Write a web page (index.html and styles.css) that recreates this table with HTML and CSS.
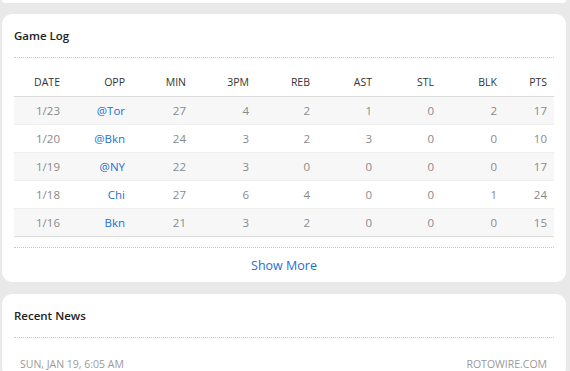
FILE: index.html
```html
<!DOCTYPE html>
<html>
<head>
<meta charset="utf-8">
<link rel="stylesheet" href="styles.css">
</head>
<body>
<div class="page">
  <div class="card card-stub"></div>

  <section class="card">
    <h2 class="card-title">Game Log</h2>
    <div class="log">
      <div class="row head">
        <span>DATE</span><span>OPP</span><span>MIN</span><span>3PM</span><span>REB</span><span>AST</span><span>STL</span><span>BLK</span><span>PTS</span>
      </div>
      <div class="row alt">
        <span>1/23</span><span class="team">@Tor</span><span>27</span><span>4</span><span>2</span><span>1</span><span>0</span><span>2</span><span>17</span>
      </div>
      <div class="row">
        <span>1/20</span><span class="team">@Bkn</span><span>24</span><span>3</span><span>2</span><span>3</span><span>0</span><span>0</span><span>10</span>
      </div>
      <div class="row alt">
        <span>1/19</span><span class="team">@NY</span><span>22</span><span>3</span><span>0</span><span>0</span><span>0</span><span>0</span><span>17</span>
      </div>
      <div class="row">
        <span>1/18</span><span class="team">Chi</span><span>27</span><span>6</span><span>4</span><span>0</span><span>0</span><span>1</span><span>24</span>
      </div>
      <div class="row alt last">
        <span>1/16</span><span class="team">Bkn</span><span>21</span><span>3</span><span>2</span><span>0</span><span>0</span><span>0</span><span>15</span>
      </div>
    </div>
    <div class="more"><a href="#">Show More</a></div>
  </section>

  <section class="card">
    <h2 class="card-title">Recent News</h2>
    <div class="news-meta">
      <span>SUN, JAN 19, 6:05 AM</span>
      <span>ROTOWIRE.COM</span>
    </div>
  </section>
</div>
</body>
</html>
```

FILE: styles.css
```css
* { box-sizing: border-box; }

html, body {
  margin: 0;
  padding: 0;
  background: #e9e9e9;
  font-family: "Open Sans", "Noto Sans", sans-serif;
  overflow: hidden;
}

.page {
  padding: 0 4px 0 2px;
  display: flex;
  flex-direction: column;
  gap: 11px;
}

.card {
  background: #fff;
  border-radius: 10px;
  padding: 0 12px;
}

.card-stub {
  height: 3px;
  border-radius: 0 0 10px 10px;
}

.card + .card:last-child {
  margin-top: 1px;
}

.card-title {
  margin: 0;
  height: 44px;
  line-height: 44px;
  font-size: 11.5px;
  font-weight: 600;
  color: #222;
  border-bottom: 1px dotted #c8c8c8;
}

.log {
  border-bottom: 1px dotted #c8c8c8;
  padding-bottom: 10px;
}

.row {
  display: grid;
  grid-template-columns: 53px 65px 61px 63px 61px 62px 62px 63px 50px;
  height: 28px;
  align-items: center;
  border-bottom: 1px solid #efefef;
  font-size: 11.5px;
  color: #8a8a8a;
}

.row span {
  text-align: right;
  padding-right: 7px;
}

.row.alt { background: #f7f7f7; }
.row.last { border-bottom-color: #dcdcdc; }

.row.head {
  height: 39px;
  align-items: end;
  padding-bottom: 7px;
  border-bottom: 1px solid #dcdcdc;
  font-size: 10.5px;
  color: #333;
}

.team { color: #2272d4; }

.more {
  height: 34px;
  display: flex;
  align-items: center;
  justify-content: center;
}

.more a {
  color: #1d6fd1;
  font-size: 12.5px;
  text-decoration: none;
}

.news-meta {
  display: flex;
  justify-content: space-between;
  padding: 19px 7px 0 6px;
  font-size: 10.5px;
  color: #9a9a9a;
  height: 40px;
}
```
